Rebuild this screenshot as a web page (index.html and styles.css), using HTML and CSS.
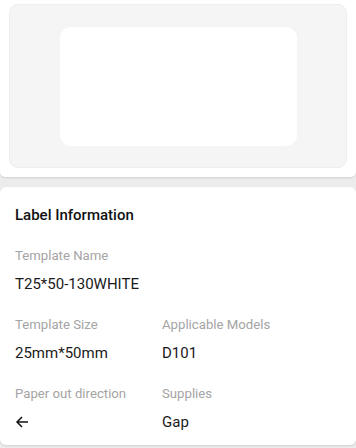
FILE: index.html
```html
<!DOCTYPE html>
<html>
<head>
<meta charset="utf-8">
<link rel="stylesheet" href="styles.css">
</head>
<body>
<div class="preview-card">
  <div class="preview-panel">
    <div class="label-shape"></div>
  </div>
</div>
<div class="info-card">
  <div class="info-title">Label Information</div>
  <div class="field">
    <div class="field-label">Template Name</div>
    <div class="field-value">T25*50-130WHITE</div>
  </div>
  <div class="grid">
    <div class="field">
      <div class="field-label">Template Size</div>
      <div class="field-value">25mm*50mm</div>
    </div>
    <div class="field">
      <div class="field-label">Applicable Models</div>
      <div class="field-value">D101</div>
    </div>
    <div class="field">
      <div class="field-label">Paper out direction</div>
      <div class="field-value arrow">
        <svg width="14" height="14" viewBox="0 0 14 14"><path d="M13 7H2M7 2L2 7L7 12" fill="none" stroke="#111" stroke-width="1.5"/></svg>
      </div>
    </div>
    <div class="field">
      <div class="field-label">Supplies</div>
      <div class="field-value">Gap</div>
    </div>
  </div>
</div>
</body>
</html>
```
FILE: styles.css
```css
html, body {
  margin: 0;
  padding: 0;
}
body {
  width: 356px;
  height: 448px;
  background: #ececec;
  font-family: Roboto, "Liberation Sans", sans-serif;
  overflow: hidden;
}
.preview-card {
  background: #fff;
  height: 177px;
  border-radius: 0 0 5px 5px;
  box-shadow: 0 1px 2px rgba(0,0,0,0.12);
  padding: 4px 9px 0 9px;
  box-sizing: border-box;
}
.preview-panel {
  height: 164px;
  background: #f5f5f5;
  border: 1px solid #eeeeee;
  border-radius: 9px;
  box-sizing: border-box;
  display: flex;
  align-items: center;
  justify-content: center;
}
.label-shape {
  width: 237px;
  height: 119px;
  background: #fff;
  border-radius: 11px;
  margin-left: 1px;
  margin-top: 1px;
}
.info-card {
  margin-top: 10px;
  background: #fff;
  border-radius: 6px;
  height: 258px;
  box-shadow: 0 1px 2px rgba(0,0,0,0.12);
  padding: 0 15px;
  box-sizing: border-box;
}
.info-title {
  font-size: 15px;
  font-weight: 500;
  color: #111;
  padding-top: 20px;
  line-height: 16px;
}
.field {
  padding-top: 24px;
}
.field-label {
  font-size: 13.2px;
  color: #a4a4a4;
  line-height: 17px;
}
.field-value {
  font-size: 15px;
  color: #1a1a1a;
  line-height: 16px;
  margin-top: 12px;
}
.grid {
  display: grid;
  grid-template-columns: 147px 1fr;
}
.arrow {
  height: 16px;
  display: flex;
  align-items: center;
}
.arrow svg {
  display: block;
}
```
